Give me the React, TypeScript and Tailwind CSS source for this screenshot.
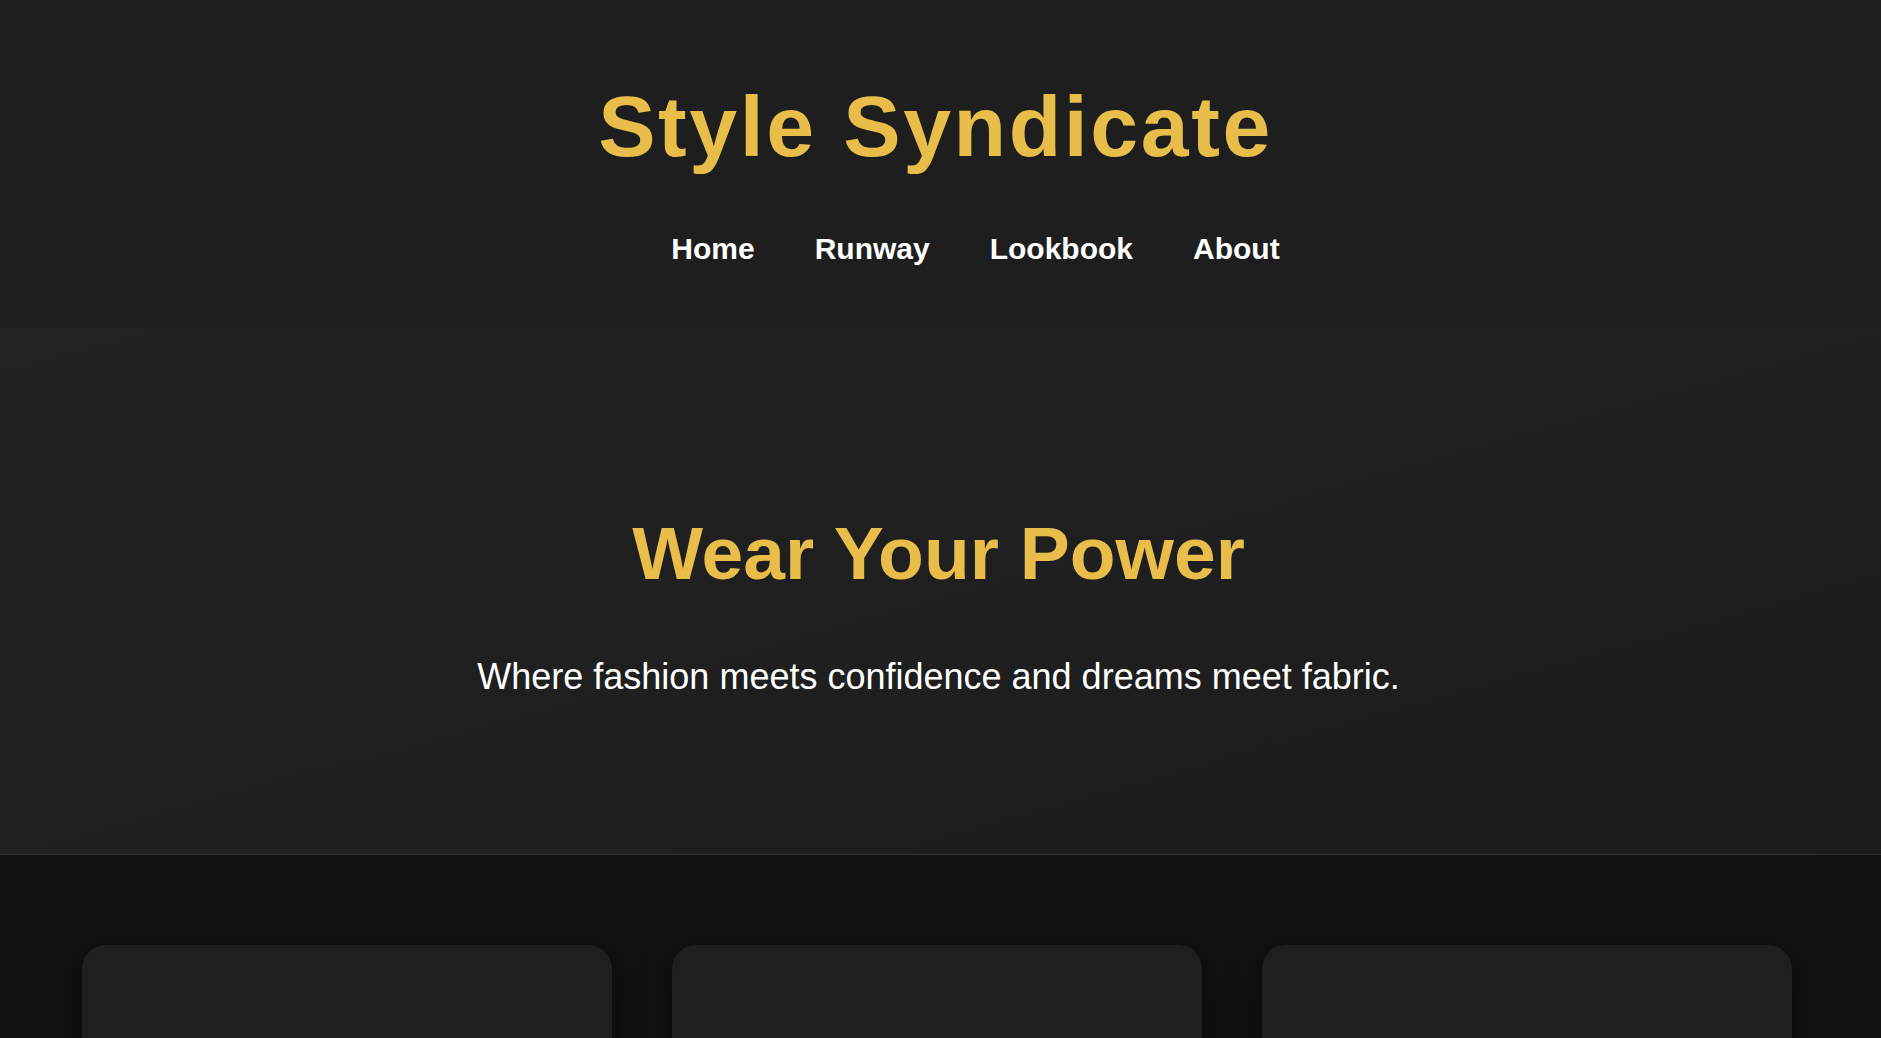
import React from "react";

const navItems = ["Home", "Runway", "Lookbook", "About"];

export default function App() {
  return (
    <div
      className="min-h-screen bg-[#111111] text-white"
      style={{ fontFamily: '"Liberation Sans", Arial, sans-serif' }}
    >
      <header className="bg-[#1e1e1e] pt-[77px] pb-[62px] flex flex-col items-center">
        <h1 className="text-[86px] leading-[normal] font-bold tracking-[2.6px] text-[#e9bd4a] m-0 pr-[10px]">
          Style Syndicate
        </h1>
        <nav className="mt-[56px] pl-[70px]">
          <ul className="flex gap-[60px] list-none m-0 p-0">
            {navItems.map((n) => (
              <li key={n}>
                <a href="#" className="text-[30px] leading-[normal] font-bold text-white no-underline">
                  {n}
                </a>
              </li>
            ))}
          </ul>
        </nav>
      </header>

      <section className="bg-gradient-to-br from-[#222222] to-[#1c1c1c] border-b border-[#333333] pt-[182px] pb-[156px] flex flex-col items-center text-center">
        <h2 className="text-[75px] leading-[normal] font-bold text-[#e9bd4a] m-0 pr-[4px]">Wear Your Power</h2>
        <p className="mt-[60px] text-[36px] leading-[normal] text-white pr-[4px]">
          Where fashion meets confidence and dreams meet fabric.
        </p>
      </section>

      <section className="bg-[#111111] pt-[90px] pb-[80px] pl-[82px] pr-[89px] grid grid-cols-3 gap-[60px]">
        {[0, 1, 2].map((i) => (
          <div
            key={i}
            className="h-[420px] rounded-3xl bg-[#1f1f1f] shadow-[0_10px_30px_rgba(0,0,0,0.5)]"
          />
        ))}
      </section>
    </div>
  );
}
